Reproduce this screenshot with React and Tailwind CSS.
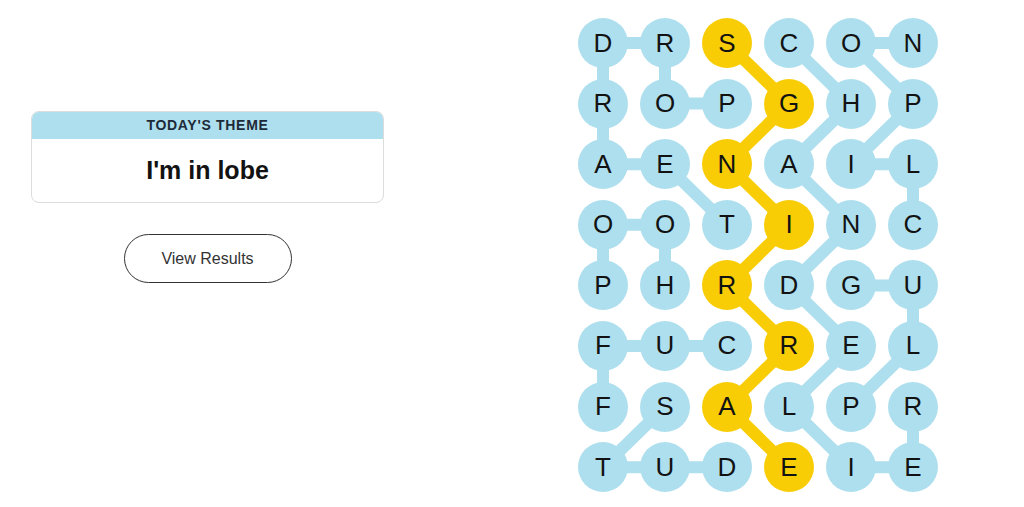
const LETTERS = [
  "DRSCON",
  "ROPGHP",
  "AENAIL",
  "OOTINC",
  "PHRDGU",
  "FUCREL",
  "FSALPR",
  "TUDEIE",
];

// found words as [row, col] paths
const WORDS = [
  [[3, 2], [2, 1], [2, 0], [1, 0], [0, 0], [0, 1], [1, 1], [1, 2]],
  [[0, 3], [1, 4], [2, 3], [3, 4], [4, 3], [5, 4], [6, 3], [7, 4], [7, 5], [6, 5]],
  [[3, 5], [2, 5], [2, 4], [1, 5], [0, 4], [0, 5]],
  [[6, 4], [5, 5], [4, 5], [4, 4]],
  [[4, 1], [3, 1], [3, 0], [4, 0]],
  [[5, 2], [5, 1], [5, 0], [6, 0]],
  [[6, 1], [7, 0], [7, 1], [7, 2]],
];
const SPANGRAM = [[0, 2], [1, 3], [2, 2], [3, 3], [4, 2], [5, 3], [6, 2], [7, 3]];

const CELL = 50;
const STEP_X = 62;
const STEP_Y = 60.6;

const cx = (c) => CELL / 2 + c * STEP_X;
const cy = (r) => CELL / 2 + r * STEP_Y;
const pts = (path) => path.map(([r, c]) => `${cx(c)},${cy(r)}`).join(" ");

const isSpan = (r, c) => SPANGRAM.some(([a, b]) => a === r && b === c);

function Board() {
  return (
    <div className="relative">
      {/* connecteurs derrière les lettres */}
      <svg className="absolute inset-0" width="360" height="475">
        {WORDS.map((w, i) => (
          <polyline key={i} points={pts(w)} fill="none" stroke="#aedfee" strokeWidth="12" strokeLinejoin="round" strokeLinecap="round" />
        ))}
        <polyline points={pts(SPANGRAM)} fill="none" stroke="#f8cd05" strokeWidth="12" strokeLinejoin="round" strokeLinecap="round" />
      </svg>
      <div className="relative grid grid-cols-[repeat(6,50px)] auto-rows-[50px] gap-x-[12px] gap-y-[10.6px]">
        {LETTERS.map((row, r) =>
          row.split("").map((ch, c) => (
            <div
              key={`${r}-${c}`}
              className={`w-[50px] h-[50px] rounded-full flex items-center justify-center text-[26px] text-[#121212] ${
                isSpan(r, c) ? "bg-[#f8cd05]" : "bg-[#aedfee]"
              }`}
            >
              {ch}
            </div>
          ))
        )}
      </div>
    </div>
  );
}

export default function App() {
  return (
    <div className="w-[1024px] h-[507px] bg-white flex font-['Liberation_Sans',Arial,sans-serif] overflow-hidden">
      <div className="w-[384px] pl-[31px] pt-[111px] flex flex-col items-center">
        <div className="w-[353px] rounded-lg border border-[#dcdcdc] overflow-hidden">
          <div className="h-[27px] bg-[#aedfee] flex items-center justify-center text-[14px] font-bold tracking-[0.05em] text-[#1d2a38]">
            TODAY'S THEME
          </div>
          <div className="h-[63px] flex items-center justify-center text-[25px] font-bold text-[#121212]">
            I'm in lobe
          </div>
        </div>
        <button className="mt-[31px] w-[168px] h-[49px] rounded-full border-[1.5px] border-[#333] text-[16px] text-[#333] bg-white">
          View Results
        </button>
      </div>
      <div className="ml-[194px] mt-[18px]">
        <Board />
      </div>
    </div>
  );
}
